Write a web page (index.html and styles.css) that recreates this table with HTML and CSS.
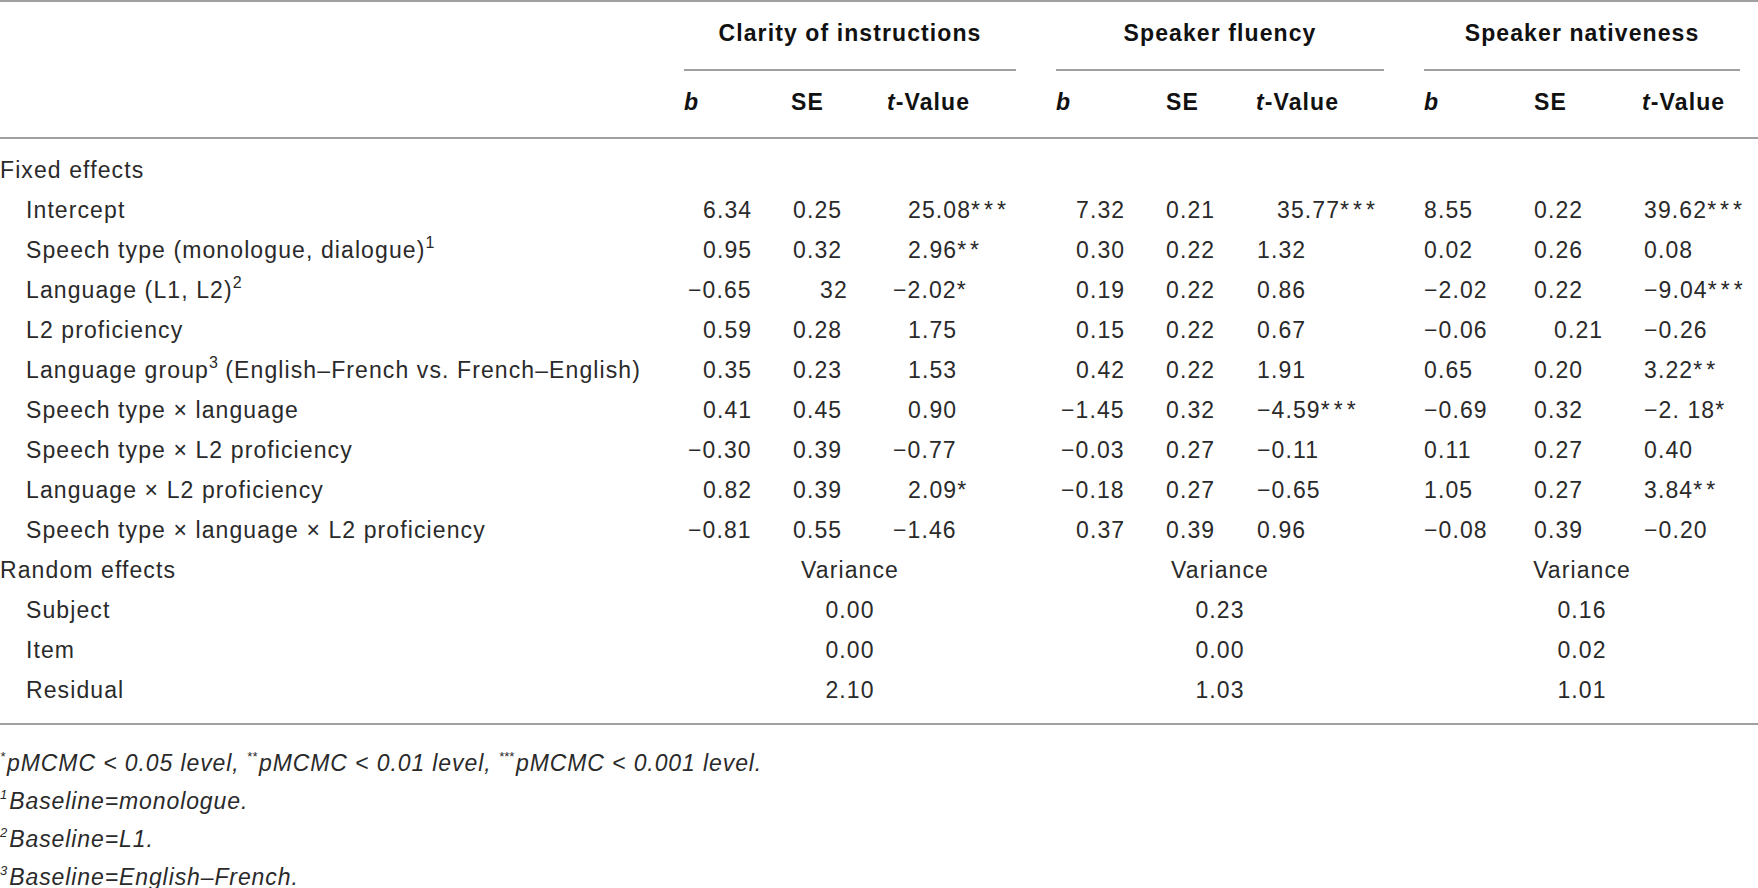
FILE: index.html
```html
<!DOCTYPE html>
<html>
<head>
    <meta charset="utf-8">
    <title>Mixed model estimates</title>
    <link rel="stylesheet" href="styles.css">
</head>
<body>
    <table class="results">
        <colgroup>
            <col class="w-label">
            <col class="w-b1"><col class="w-se1"><col class="w-t1">
            <col class="w-gap">
            <col class="w-b2"><col class="w-se2"><col class="w-t2">
            <col class="w-gap">
            <col class="w-b3"><col class="w-se3"><col class="w-t3">
            <col class="w-end">
        </colgroup>
        <thead>
            <tr class="groups">
                <th class="corner" rowspan="2"></th>
                <th class="group" colspan="3">Clarity of instructions</th>
                <th></th>
                <th class="group" colspan="3">Speaker fluency</th>
                <th></th>
                <th class="group" colspan="3">Speaker nativeness</th>
                <th></th>
            </tr>
            <tr class="subs">
                <th><i>b</i></th><th>SE</th><th><i>t</i>-Value</th>
                <th></th>
                <th><i>b</i></th><th>SE</th><th><i>t</i>-Value</th>
                <th></th>
                <th><i>b</i></th><th>SE</th><th><i>t</i>-Value</th>
                <th></th>
            </tr>
        </thead>
        <tbody>
            <tr class="section"><td colspan="13">Fixed effects</td></tr>
            <tr class="fx">
                <td class="label">Intercept</td>
                <td>6.34</td><td>0.25</td><td>25.08<span class="sig">***</span></td><td></td>
                <td>7.32</td><td>0.21</td><td class="push">35.77<span class="sig">***</span></td><td></td>
                <td>8.55</td><td>0.22</td><td>39.62<span class="sig">***</span></td><td></td>
            </tr>
            <tr class="fx">
                <td class="label">Speech type (monologue, dialogue)<sup>1</sup></td>
                <td>0.95</td><td>0.32</td><td>2.96<span class="sig">**</span></td><td></td>
                <td>0.30</td><td>0.22</td><td>1.32</td><td></td>
                <td>0.02</td><td>0.26</td><td>0.08</td><td></td>
            </tr>
            <tr class="fx">
                <td class="label">Language (L1, L2)<sup>2</sup></td>
                <td class="hang">−0.65</td><td class="push-far">32</td><td class="hang">−2.02<span class="sig">*</span></td><td></td>
                <td>0.19</td><td>0.22</td><td>0.86</td><td></td>
                <td>−2.02</td><td>0.22</td><td>−9.04<span class="sig">***</span></td><td></td>
            </tr>
            <tr class="fx">
                <td class="label">L2 proficiency</td>
                <td>0.59</td><td>0.28</td><td>1.75</td><td></td>
                <td>0.15</td><td>0.22</td><td>0.67</td><td></td>
                <td>−0.06</td><td class="push">0.21</td><td>−0.26</td><td></td>
            </tr>
            <tr class="fx">
                <td class="label">Language group<sup>3</sup> (English–French vs. French–English)</td>
                <td>0.35</td><td>0.23</td><td>1.53</td><td></td>
                <td>0.42</td><td>0.22</td><td>1.91</td><td></td>
                <td>0.65</td><td>0.20</td><td>3.22<span class="sig">**</span></td><td></td>
            </tr>
            <tr class="fx">
                <td class="label">Speech type × language</td>
                <td>0.41</td><td>0.45</td><td>0.90</td><td></td>
                <td class="hang">−1.45</td><td>0.32</td><td>−4.59<span class="sig">***</span></td><td></td>
                <td>−0.69</td><td>0.32</td><td>−2. 18<span class="sig">*</span></td><td></td>
            </tr>
            <tr class="fx">
                <td class="label">Speech type × L2 proficiency</td>
                <td class="hang">−0.30</td><td>0.39</td><td class="hang">−0.77</td><td></td>
                <td class="hang">−0.03</td><td>0.27</td><td>−0.11</td><td></td>
                <td>0.11</td><td>0.27</td><td>0.40</td><td></td>
            </tr>
            <tr class="fx">
                <td class="label">Language × L2 proficiency</td>
                <td>0.82</td><td>0.39</td><td>2.09<span class="sig">*</span></td><td></td>
                <td class="hang">−0.18</td><td>0.27</td><td>−0.65</td><td></td>
                <td>1.05</td><td>0.27</td><td>3.84<span class="sig">**</span></td><td></td>
            </tr>
            <tr class="fx">
                <td class="label">Speech type × language × L2 proficiency</td>
                <td class="hang">−0.81</td><td>0.55</td><td class="hang">−1.46</td><td></td>
                <td>0.37</td><td>0.39</td><td>0.96</td><td></td>
                <td>−0.08</td><td>0.39</td><td>−0.20</td><td></td>
            </tr>
            <tr class="section">
                <td>Random effects</td>
                <td class="var" colspan="3">Variance</td><td></td>
                <td class="var" colspan="3">Variance</td><td></td>
                <td class="var" colspan="3">Variance</td><td></td>
            </tr>
            <tr>
                <td class="label">Subject</td>
                <td class="var" colspan="3">0.00</td><td></td>
                <td class="var" colspan="3">0.23</td><td></td>
                <td class="var" colspan="3">0.16</td><td></td>
            </tr>
            <tr>
                <td class="label">Item</td>
                <td class="var" colspan="3">0.00</td><td></td>
                <td class="var" colspan="3">0.00</td><td></td>
                <td class="var" colspan="3">0.02</td><td></td>
            </tr>
            <tr>
                <td class="label">Residual</td>
                <td class="var" colspan="3">2.10</td><td></td>
                <td class="var" colspan="3">1.03</td><td></td>
                <td class="var" colspan="3">1.01</td><td></td>
            </tr>
        </tbody>
    </table>

    <div class="notes">
        <p><sup>*</sup>pMCMC &lt; 0.05 level, <sup>**</sup>pMCMC &lt; 0.01 level, <sup>***</sup>pMCMC &lt; 0.001 level.</p>
        <p><sup>1</sup>Baseline=monologue.</p>
        <p><sup>2</sup>Baseline=L1.</p>
        <p><sup>3</sup>Baseline=English–French.</p>
    </div>
</body>
</html>
```

FILE: styles.css
```css
html {
    overflow: hidden;
}
body {
    margin: 0;
    background-color: #ffffff;
    color: #2a2a2a;
    font-family: 'Liberation Sans', Arial, sans-serif;
    font-size: 23px;
    letter-spacing: 1.1px;
}
.results {
    width: 1758px;
    table-layout: fixed;
    border-collapse: separate;
    border-spacing: 0;
    border-top: 2px solid #a0a0a0;
    border-bottom: 2px solid #a0a0a0;
}
.w-label { width: 684px; }
.w-b1 { width: 107px; }
.w-se1 { width: 96px; }
.w-t1 { width: 129px; }
.w-gap { width: 40px; }
.w-b2 { width: 110px; }
.w-se2 { width: 90px; }
.w-t2 { width: 128px; }
.w-b3 { width: 110px; }
.w-se3 { width: 108px; }
.w-t3 { width: 98px; }
.w-end { width: 18px; }

th {
    padding: 0;
    color: #111;
    font-weight: bold;
    text-align: left;
    line-height: 30px;
    white-space: nowrap;
}
.groups th {
    padding-top: 16px;
    padding-bottom: 21px;
}
.groups th.group {
    text-align: center;
    border-bottom: 2px solid #a0a0a0;
}
.subs th {
    padding-top: 16px;
    padding-bottom: 20px;
    border-bottom: 2px solid #a0a0a0;
}
th.corner {
    border-bottom: 2px solid #a0a0a0;
}

td {
    padding: 0;
    line-height: 40px;
    white-space: nowrap;
    text-align: left;
}
tbody tr:first-child td {
    padding-top: 11px;
}
tbody tr:last-child td {
    padding-bottom: 13px;
}
td.label {
    padding-left: 26px;
}
td.var {
    text-align: center;
}

/* numbers start at a fixed offset inside each column */
.fx td:nth-child(2) { padding-left: 19px; }
.fx td:nth-child(3) { padding-left: 2px; }
.fx td:nth-child(4) { padding-left: 21px; }
.fx td:nth-child(6) { padding-left: 20px; }
.fx td:nth-child(7) { padding-left: 0; }
.fx td:nth-child(8) { padding-left: 1px; }
.fx td:nth-child(10) { padding-left: 0; }
.fx td:nth-child(11) { padding-left: 0; }
.fx td:nth-child(12) { padding-left: 2px; }
.fx td.hang { text-indent: -15px; }
.fx td.push { text-indent: 20px; }
.fx td.push-far { text-indent: 27px; }

.sig {
    letter-spacing: 4px;
}
sup {
    font-size: 16px;
    line-height: 0;
    vertical-align: 10px;
    letter-spacing: 0;
}

.notes {
    padding-top: 19px;
    font-style: italic;
    letter-spacing: 0.9px;
}
.notes p {
    margin: 0;
    line-height: 38px;
}
.notes sup {
    font-size: 13px;
    margin-right: 2px;
}
```
